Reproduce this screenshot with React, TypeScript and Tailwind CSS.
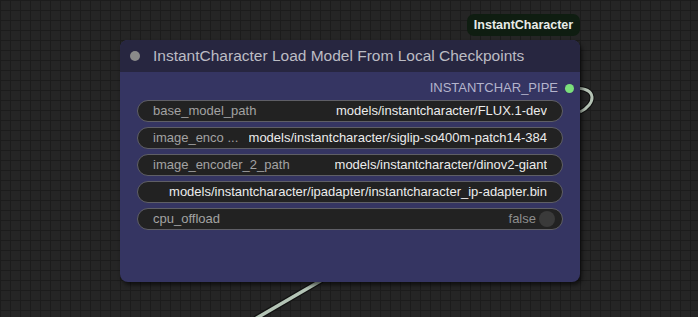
import React from "react";

type Widget = {
  label?: string;
  value: string;
  toggle?: boolean;
};

const widgets: Widget[] = [
  { label: "base_model_path", value: "models/instantcharacter/FLUX.1-dev" },
  { label: "image_enco ...", value: "models/instantcharacter/siglip-so400m-patch14-384" },
  { label: "image_encoder_2_path", value: "models/instantcharacter/dinov2-giant" },
  { value: "models/instantcharacter/ipadapter/instantcharacter_ip-adapter.bin" },
  { label: "cpu_offload", value: "false", toggle: true },
];

function WidgetRow({ w }: { w: Widget }) {
  return (
    <div className="flex h-[22px] items-center justify-between rounded-full border border-[#5f5f66] bg-[#222222] pl-[15px] pr-[15px] text-[13px] leading-[16px]">
      <span className="shrink-0 text-[#a3a3a3]">{w.label ?? ""}</span>
      {w.toggle ? (
        <div className="-mr-[8px] flex items-center gap-[3px]">
          <span className="text-[#8e8e8e]">{w.value}</span>
          <span className="h-[16px] w-[16px] rounded-full bg-[#3a3a3a]" />
        </div>
      ) : (
        <span className="ml-[8px] truncate text-[#ececec]">{w.value}</span>
      )}
    </div>
  );
}

export default function App() {
  return (
    <div
      className="relative h-[317px] w-[698px] overflow-hidden bg-[#252525] bg-[linear-gradient(to_right,#1c1c1c_1px,transparent_1px),linear-gradient(to_bottom,#1c1c1c_1px,transparent_1px)] bg-[size:10px_10px]"
      style={{ fontFamily: '"Liberation Sans", Arial, sans-serif' }}
    >
      {/* links */}
      <svg className="absolute inset-0" width="698" height="317">
        <path d="M574 88 C 598 88, 596 104, 580 112" fill="none" stroke="#111" strokeWidth="5" />
        <path d="M574 88 C 598 88, 596 104, 580 112" fill="none" stroke="#b4c2b4" strokeWidth="3" />
        <path d="M322 280 L 255 319" fill="none" stroke="#111" strokeWidth="6" />
        <path d="M322 280 L 255 319" fill="none" stroke="#b4c4b6" strokeWidth="3.5" />
      </svg>

      {/* group badge */}
      <div className="absolute left-[467px] top-[14px] flex h-[22px] w-[113px] items-center justify-center rounded-[7px] bg-[#0f1d11] text-[12.5px] font-bold text-[#e8ece8]">
        InstantCharacter
      </div>

      {/* node */}
      <div className="absolute left-[120px] top-[40px] flex h-[242px] w-[460px] flex-col overflow-hidden rounded-[8px] bg-[#353562] shadow-[2px_3px_4px_rgba(0,0,0,0.6)]">
        <div className="flex h-[32px] shrink-0 items-center gap-[13px] bg-[#272640] pl-[10px]">
          <span className="h-[10px] w-[10px] rounded-full bg-[#8a8a8a]" />
          <span className="text-[15.5px] text-[#bcbcc4]">
            InstantCharacter Load Model From Local Checkpoints
          </span>
        </div>

        <div className="mt-[6px] flex h-[20px] items-center justify-end gap-[7px] pr-[6px] text-[13px] text-[#b4b4cc]">
          <span>INSTANTCHAR_PIPE</span>
          <span className="h-[9px] w-[9px] rounded-full bg-[#7be07b]" />
        </div>

        <div className="mt-[2px] flex flex-col gap-[5px] px-[17px]">
          {widgets.map((w, i) => (
            <WidgetRow key={i} w={w} />
          ))}
        </div>
      </div>
    </div>
  );
}
